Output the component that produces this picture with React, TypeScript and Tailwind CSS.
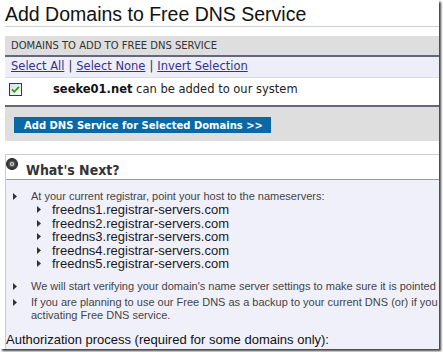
import React from "react";

const Tri = ({ color = "#333" }: { color?: string }) => (
  <svg width="4" height="7" viewBox="0 0 4 7" className="block shrink-0">
    <path d="M0 0 L4 3.5 L0 7 Z" fill={color} />
  </svg>
);

const Gear = () => {
  const teeth = [];
  for (let i = 0; i < 8; i++) {
    teeth.push(
      <rect
        key={i}
        x="4.9"
        y="0"
        width="2.2"
        height="12"
        fill="#333"
        transform={`rotate(${i * 22.5} 6 6)`}
      />
    );
  }
  return (
    <svg width="12" height="12" viewBox="0 0 12 12" className="block">
      {teeth}
      <circle cx="6" cy="6" r="3.6" fill="#555" />
      <circle cx="6" cy="6" r="2.1" fill="#d4d4d4" />
      <circle cx="6" cy="6" r="1" fill="#666" />
    </svg>
  );
};

const CheckBox = () => (
  <svg width="13" height="13" viewBox="0 0 13 13" className="block shrink-0">
    <defs>
      <linearGradient id="cbg" x1="0" y1="0" x2="1" y2="1">
        <stop offset="0" stopColor="#dcdcd6" />
        <stop offset="1" stopColor="#ffffff" />
      </linearGradient>
    </defs>
    <rect x="0.5" y="0.5" width="12" height="12" fill="url(#cbg)" stroke="#1c3f5e" />
    <path d="M3 6.3 L5.3 8.8 L10 3.8" fill="none" stroke="#21a121" strokeWidth="1.8" />
  </svg>
);

const verdana = { fontFamily: "'DejaVu Sans', Verdana, sans-serif" };
const verdanaCond = { fontFamily: "'DejaVu Sans Condensed', 'DejaVu Sans', sans-serif" };
const arial = { fontFamily: "'Liberation Sans', Arial, sans-serif" };

const servers = [
  "freedns1.registrar-servers.com",
  "freedns2.registrar-servers.com",
  "freedns3.registrar-servers.com",
  "freedns4.registrar-servers.com",
  "freedns5.registrar-servers.com",
];

export default function App() {
  return (
    <div className="w-[443px] h-[352px] bg-white overflow-hidden">
      <div className="w-[439px] h-[349px] bg-white overflow-hidden shadow-[2px_2px_2px_rgba(0,0,0,0.75)]">
        <div className="pl-[5px]">
          <h1
            className="pt-[2px] text-[19.5px] leading-[24px] text-[#111] border-b border-[#cfcfcf] font-normal"
            style={arial}
          >
            Add Domains to Free DNS Service
          </h1>

          <div className="mt-[9px]" style={verdana}>
            <div className="h-[21px] bg-[#dedede] border-b-2 border-[#66667a] pl-[6px] flex items-center text-[10px] text-[#333]">
              DOMAINS TO ADD TO FREE DNS SERVICE
            </div>
            <div className="h-[21px] bg-[#eeeef8] border-b border-[#dcdce4] pl-[6px] flex items-center text-[11.5px] text-[#333]">
              <a className="underline text-[#35318a]">Select All</a>
              <span className="px-[4px]">|</span>
              <a className="underline text-[#35318a]">Select None</a>
              <span className="px-[4px]">|</span>
              <a className="underline text-[#35318a]">Invert Selection</a>
            </div>
            <div className="h-[27px] pt-[5px]">
              <div className="h-[13px] flex items-center pl-[4px]">
                <CheckBox />
                <span className="ml-[31px] text-[11.5px] text-[#222] whitespace-nowrap">
                  <b className="text-[#111]">seeke01.net</b> can be added to our system
                </span>
              </div>
            </div>
            <div className="h-[36px] border-t-2 border-[#66667a] bg-[#dedede] pt-[10px] pl-[9px]">
              <div className="w-[258px] h-[16px] bg-[#0869a6] border-r border-[#bfe3f5] pl-[10px] flex items-center text-[10px] font-bold text-white whitespace-nowrap">
                Add DNS Service for Selected Domains &gt;&gt;
              </div>
            </div>
          </div>

          <div className="mt-[13px] border-t border-l border-[#cccccc]">
            <div className="h-[25px] border-b border-[#9a9a9a] bg-white flex items-start">
              <div className="mt-[3px] shrink-0">
                <Gear />
              </div>
              <div
                className="ml-[8px] mt-[7px] text-[14px] leading-[16px] font-bold text-[#333]"
                style={verdanaCond}
              >
                What's Next?
              </div>
            </div>
            <div className="bg-[#f0f0fa] pt-[9px] h-[200px] overflow-hidden" style={arial}>
              <div className="flex items-start">
                <div className="w-[25px] shrink-0 pl-[7px] h-[14px] flex items-center">
                  <Tri />
                </div>
                <div>
                  <div className="text-[11px] leading-[14px] text-[#444] whitespace-nowrap">
                    At your current registrar, point your host to the nameservers:
                  </div>
                  {servers.map((s) => (
                    <div key={s} className="flex items-center h-[13.5px]">
                      <div className="w-[21px] shrink-0 pl-[6px]">
                        <Tri />
                      </div>
                      <div className="text-[13px] leading-[13.5px] text-[#1a1a1a] whitespace-nowrap">
                        {s}
                      </div>
                    </div>
                  ))}
                </div>
              </div>

              <div className="flex items-start mt-[9px]">
                <div className="w-[25px] shrink-0 pl-[7px] h-[13px] flex items-center">
                  <Tri />
                </div>
                <div className="text-[11px] leading-[13px] text-[#444] whitespace-nowrap">
                  We will start verifying your domain's name server settings to make sure it is pointed correctly.
                </div>
              </div>

              <div className="flex items-start mt-[3px]">
                <div className="w-[25px] shrink-0 pl-[7px] h-[13px] flex items-center">
                  <Tri />
                </div>
                <div className="text-[11px] leading-[13px] text-[#444] whitespace-nowrap">
                  <div>If you are planning to use our Free DNS as a backup to your current DNS (or) if you want to test it before</div>
                  <div>activating Free DNS service.</div>
                </div>
              </div>

              <div className="mt-[10.5px] text-[13px] leading-[16px] text-[#111] whitespace-nowrap">
                Authorization process (required for some domains only):
              </div>
            </div>
          </div>
        </div>
      </div>
    </div>
  );
}
